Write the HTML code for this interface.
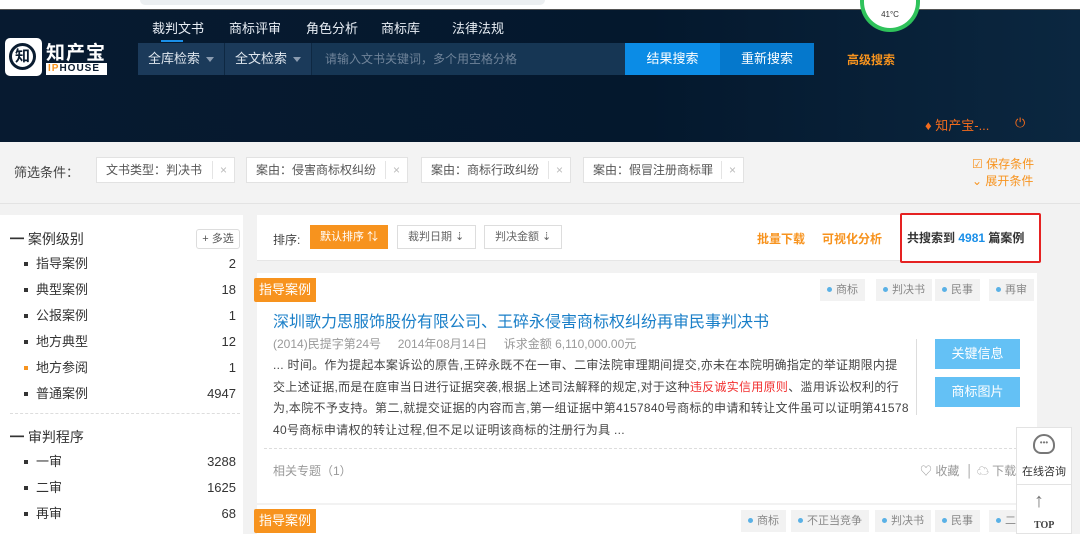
<!DOCTYPE html>
<html><head><meta charset="utf-8"><style>
*{margin:0;padding:0;box-sizing:border-box}
html,body{width:1080px;height:534px;overflow:hidden}
body{background:#f2f2f2;font-family:"Liberation Sans","Noto Sans CJK SC",sans-serif;font-size:12px;color:#333;position:relative}
.a{position:absolute}
.top{left:0;top:0;width:1080px;height:10px;background:#fff;border-bottom:1px solid #555}
.hdr{left:0;top:10px;width:1080px;height:132px;background:linear-gradient(90deg,#071a30 0%,#04182d 60%,#0b2740 100%)}
.nav{top:18px;color:#e8eef5;font-size:13px}
.sel{top:43px;height:32px;background:#1b3a5a;color:#dfe6ee;font-size:13px;line-height:32px;padding-left:10px;border-right:1px solid #0e2842}
.sel:after{content:"";position:absolute;right:10px;top:14px;border:4px solid transparent;border-top:5px solid #8a9bb0}
.tag{top:157px;height:26px;background:#fff;border:1px solid #e2e2e2;color:#555;line-height:24px;padding-left:9px;font-size:12px}
.tag i{position:absolute;right:0;top:3px;width:22px;height:18px;border-left:1px solid #e4e4e4;color:#bbb;font-style:normal;text-align:center;line-height:18px}
.li{left:24px;font-size:13px;color:#333;width:212px;line-height:16px}
.li:before{content:"";position:absolute;left:0;top:6px;width:4px;height:4px;background:#333}
.li span{position:absolute;right:0;top:0}
.li b{font-weight:normal;margin-left:12px}
.chip{height:22px;background:#f2f2f2;color:#888;font-size:11px;line-height:22px;padding:0 7px}
.chip:before{content:"";display:inline-block;width:5px;height:5px;border-radius:50%;background:#5ab1e6;margin-right:4px;vertical-align:1px}
.badge{background:#f7931e;color:#fff;font-size:13px;height:24px;line-height:24px;padding:0 5px;border-radius:2px 0 0 2px}
.sb{top:225px;height:24px;border:1px solid #ddd;background:#fff;color:#666;font-size:11px;line-height:22px;padding-left:10px}
</style></head><body>
<div class="a top"></div>
<div class="a" style="left:140px;top:0;width:405px;height:5px;background:#eceff1;border-radius:0 0 6px 6px"></div>
<div class="a hdr"></div>
<div class="a" style="left:860px;top:0;width:60px;height:32px;border:4px solid #2fc25b;border-top:none;border-radius:0 0 30px 30px;background:#fff;font-size:8px;text-align:center;padding-top:10px;color:#333">41°C</div>
<div class="a" style="left:5px;top:38px;width:37px;height:38px;background:#fff;border-radius:5px"></div>
<div class="a" style="left:9px;top:43px;width:27px;height:27px;border:3px solid #0a1c30;border-radius:50%;color:#0a1c30;font-size:15px;font-weight:bold;text-align:center;line-height:21px">知</div>
<div class="a" style="left:46px;top:38px;color:#fff;font-size:19px;font-weight:bold;letter-spacing:1px">知产宝</div>
<div class="a" style="left:46px;top:63px;width:61px;height:12px;background:#fff;color:#0a1c30;font-size:10px;font-weight:bold;line-height:12px;letter-spacing:1px;padding-left:2px"><span style="color:#f7931e">IP</span>HOUSE</div>
<div class="a nav" style="left:152px">裁判文书</div>
<div class="a" style="left:161px;top:40px;width:22px;height:2px;background:#1a8fe8"></div>
<div class="a nav" style="left:229px">商标评审</div>
<div class="a nav" style="left:306px">角色分析</div>
<div class="a nav" style="left:381px">商标库</div>
<div class="a nav" style="left:452px">法律法规</div>
<div class="a sel" style="left:138px;width:87px">全库检索</div>
<div class="a sel" style="left:225px;width:87px">全文检索</div>
<div class="a" style="left:312px;top:43px;width:313px;height:32px;background:#163654;color:#6f8399;line-height:32px;padding-left:13px;font-size:12px">请输入文书关键词，多个用空格分格</div>
<div class="a" style="left:625px;top:43px;width:95px;height:32px;background:#0b8ce6;color:#fff;text-align:center;line-height:32px;font-size:13px">结果搜索</div>
<div class="a" style="left:720px;top:43px;width:94px;height:32px;background:#0578cc;color:#fff;text-align:center;line-height:32px;font-size:13px">重新搜索</div>
<div class="a" style="left:847px;top:51px;color:#f7931e;font-size:12px;font-weight:bold">高级搜索</div>
<div class="a" style="left:925px;top:115px;color:#f26b1d;font-size:13px">♦ 知产宝-...</div>
<div class="a" style="left:1015px;top:115px;color:#f26b1d;font-size:13px">⏻</div>
<div class="a" style="left:0;top:142px;width:1080px;height:62px;background:#f3f3f3;border-bottom:1px solid #e3e3e3"></div>
<div class="a" style="left:14px;top:162px;font-size:13px;color:#444">筛选条件：</div>
<div class="a tag" style="left:96px;width:139px">文书类型：判决书<i>×</i></div>
<div class="a tag" style="left:246px;width:162px">案由：侵害商标权纠纷<i>×</i></div>
<div class="a tag" style="left:421px;width:150px">案由：商标行政纠纷<i>×</i></div>
<div class="a tag" style="left:583px;width:161px">案由：假冒注册商标罪<i>×</i></div>
<div class="a" style="left:972px;top:156px;color:#f7931e;font-size:12px;line-height:17px">☑ 保存条件<br>⌄ 展开条件</div>
<div class="a" style="left:0;top:215px;width:243px;height:319px;background:#fff"></div>
<div class="a" style="left:10px;top:229px;font-size:14px;color:#333">━ 案例级别</div>
<div class="a" style="left:196px;top:229px;width:44px;height:20px;border:1px solid #ddd;border-radius:3px;font-size:11px;text-align:center;line-height:18px;color:#555">+ 多选</div>
<div class="a li" style="top:256px"><b>指导案例</b><span>2</span></div>
<div class="a li" style="top:282px"><b>典型案例</b><span>18</span></div>
<div class="a li" style="top:308px"><b>公报案例</b><span>1</span></div>
<div class="a li" style="top:334px"><b>地方典型</b><span>12</span></div>
<div class="a li" style="top:360px"><b>地方参阅</b><span>1</span></div>
<div class="a" style="left:24px;top:366px;width:4px;height:4px;background:#f7931e"></div>
<div class="a li" style="top:386px"><b>普通案例</b><span>4947</span></div>
<div class="a" style="left:10px;top:413px;width:230px;border-top:1px dashed #ddd"></div>
<div class="a" style="left:10px;top:427px;font-size:14px;color:#333">━ 审判程序</div>
<div class="a li" style="top:454px"><b>一审</b><span>3288</span></div>
<div class="a li" style="top:480px"><b>二审</b><span>1625</span></div>
<div class="a li" style="top:506px"><b>再审</b><span>68</span></div>
<div class="a" style="left:257px;top:215px;width:780px;height:46px;background:#fff;border-bottom:1px solid #e6e6e6"></div>
<div class="a" style="left:273px;top:231px;font-size:12px;color:#444">排序:</div>
<div class="a" style="left:310px;top:225px;width:78px;height:24px;background:#f7931e;color:#fff;font-size:11px;line-height:24px;padding-left:10px">默认排序 ⇅</div>
<div class="a sb" style="left:397px;width:79px">裁判日期 ⇣</div>
<div class="a sb" style="left:484px;width:78px">判决金额 ⇣</div>
<div class="a" style="left:757px;top:230px;color:#f7931e;font-weight:bold;font-size:12px">批量下载</div>
<div class="a" style="left:822px;top:230px;color:#f7931e;font-weight:bold;font-size:12px">可视化分析</div>
<div class="a" style="left:900px;top:213px;width:141px;height:50px;border:2px solid #e52222;border-radius:2px;background:#fff;font-size:12px;font-weight:bold;color:#333;line-height:46px;padding-left:5px">共搜索到 <span style="color:#1a8fe8">4981</span> 篇案例</div>
<div class="a" style="left:257px;top:273px;width:780px;height:230px;background:#fff"></div>
<div class="a badge" style="left:254px;top:278px">指导案例</div>
<div class="a chip" style="left:820px;top:279px">商标</div>
<div class="a chip" style="left:876px;top:279px">判决书</div>
<div class="a chip" style="left:935px;top:279px">民事</div>
<div class="a chip" style="left:989px;top:279px">再审</div>
<div class="a" style="left:273px;top:308px;font-size:16px;color:#1a7fc8">深圳歌力思服饰股份有限公司、王碎永侵害商标权纠纷再审民事判决书</div>
<div class="a" style="left:273px;top:335px;font-size:12px;color:#999">(2014)民提字第24号 &nbsp;&nbsp;&nbsp; 2014年08月14日 &nbsp;&nbsp;&nbsp; 诉求金额 6,110,000.00元</div>
<div class="a" style="left:273px;top:355px;width:636px;font-size:12px;color:#444;line-height:21.5px;letter-spacing:0.3px;word-break:break-all">... 时间。作为提起本案诉讼的原告,王碎永既不在一审、二审法院审理期间提交,亦未在本院明确指定的举证期限内提交上述证据,而是在庭审当日进行证据突袭,根据上述司法解释的规定,对于这种<span style="color:#f23030">违反诚实信用原则</span>、滥用诉讼权利的行为,本院不予支持。第二,就提交证据的内容而言,第一组证据中第4157840号商标的申请和转让文件虽可以证明第4157840号商标申请权的转让过程,但不足以证明该商标的注册行为具 ...</div>
<div class="a" style="left:916px;top:339px;height:76px;border-left:1px solid #ddd"></div>
<div class="a" style="left:935px;top:339px;width:85px;height:30px;background:#64c1f5;color:#fff;text-align:center;line-height:30px;font-size:13px">关键信息</div>
<div class="a" style="left:935px;top:377px;width:85px;height:30px;background:#64c1f5;color:#fff;text-align:center;line-height:30px;font-size:13px">商标图片</div>
<div class="a" style="left:264px;top:448px;width:773px;border-top:1px dashed #ddd"></div>
<div class="a" style="left:273px;top:462px;color:#999;font-size:12px">相关专题（1）</div>
<div class="a" style="left:920px;top:462px;color:#999;font-size:12px">♡ 收藏 &nbsp;│ ☁ 下载</div>
<div class="a" style="left:257px;top:505px;width:780px;height:29px;background:#fff"></div>
<div class="a badge" style="left:254px;top:509px">指导案例</div>
<div class="a chip" style="left:741px;top:510px">商标</div>
<div class="a chip" style="left:791px;top:510px">不正当竞争</div>
<div class="a chip" style="left:875px;top:510px">判决书</div>
<div class="a chip" style="left:935px;top:510px">民事</div>
<div class="a chip" style="left:989px;top:510px">二审</div>
<div class="a" style="left:1016px;top:427px;width:56px;height:107px;background:#fff;border:1px solid #e3e3e3"></div>
<div class="a" style="left:1033px;top:434px;width:22px;height:20px;border:2px solid #777;border-radius:11px 11px 8px 8px;color:#777;font-size:8px;text-align:center;line-height:14px">•••</div>
<div class="a" style="left:1022px;top:463px;font-size:11px;color:#333">在线咨询</div>
<div class="a" style="left:1016px;top:484px;width:56px;border-top:1px solid #e3e3e3"></div>
<div class="a" style="left:1034px;top:490px;font-size:20px;color:#777">↑</div>
<div class="a" style="left:1034px;top:520px;font-size:10px;font-weight:bold;color:#444;font-family:'Liberation Serif',serif">TOP</div>
</body></html>
